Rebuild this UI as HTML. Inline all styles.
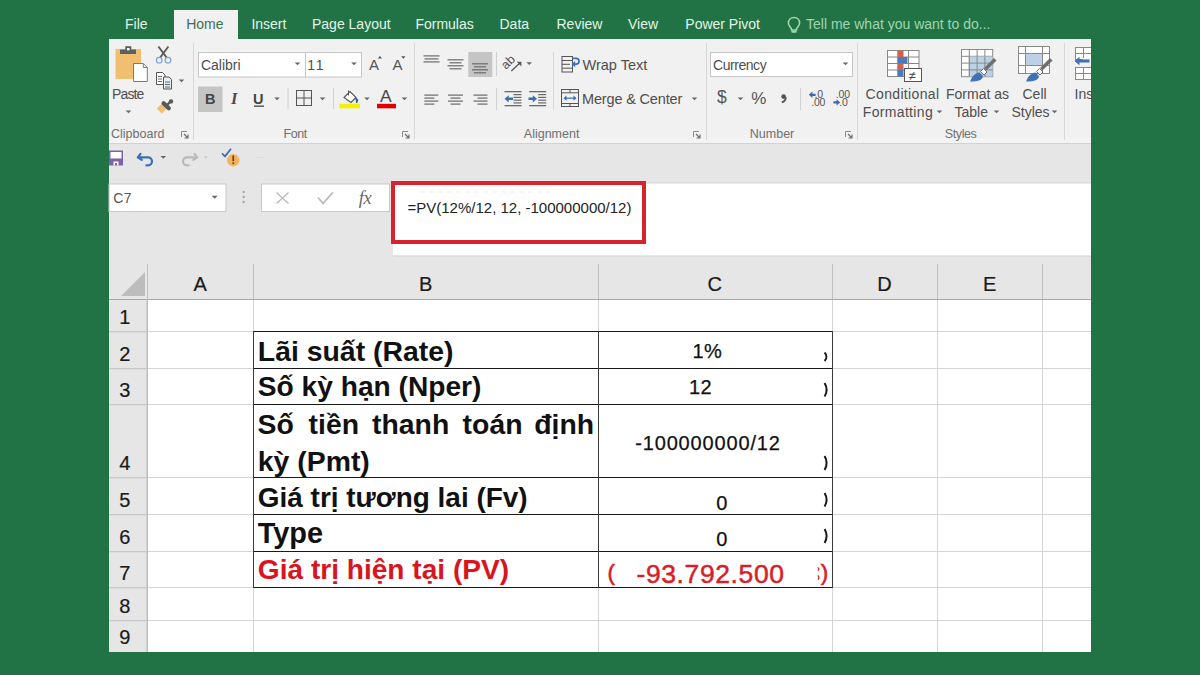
<!DOCTYPE html>
<html><head><meta charset="utf-8">
<style>
*{margin:0;padding:0;box-sizing:border-box}
html,body{width:1200px;height:675px;overflow:hidden;background:#217346;font-family:"Liberation Sans",sans-serif}
.t{position:absolute;white-space:nowrap;line-height:1}
svg{position:absolute;left:0;top:0}
</style></head><body>
<svg width="1200" height="675" viewBox="0 0 1200 675">
<rect x="174" y="10" width="64" height="30" fill="#f1f1f1" />
<path d="M794 17.5c-3.3 0-5.6 2.5-5.6 5.5 0 2.2 1.3 3.4 2.3 4.6 .6.8.8 1.4.8 2.4h5c0-1 .2-1.6.8-2.4 1-1.2 2.3-2.4 2.3-4.6 0-3-2.3-5.5-5.6-5.5z" fill="none" stroke="#9fd6b0" stroke-width="1.6" />
<rect x="791.3" y="30.6" width="5.4" height="2.2" fill="#9fd6b0" rx="1"/>
<rect x="109" y="39" width="982" height="105" fill="#f1f1f1" />
<rect x="109" y="138" width="982" height="5" fill="#f4f4f4" />
<rect x="109" y="143" width="982" height="1" fill="#d2d2d2" />
<line x1="193.5" y1="43" x2="193.5" y2="140" stroke="#d8d8d8" stroke-width="1" />
<line x1="414.5" y1="43" x2="414.5" y2="140" stroke="#d8d8d8" stroke-width="1" />
<line x1="706.5" y1="43" x2="706.5" y2="140" stroke="#d8d8d8" stroke-width="1" />
<line x1="857.5" y1="43" x2="857.5" y2="140" stroke="#d8d8d8" stroke-width="1" />
<line x1="1064.5" y1="43" x2="1064.5" y2="140" stroke="#d8d8d8" stroke-width="1" />
<path d="M181.5 137V131.5H187" fill="none" stroke="#8a8a8a" stroke-width="1" />
<path d="M184 134l3.5 3.5M188 134.5v3.5h-3.5" fill="none" stroke="#6a6a6a" stroke-width="1.1" />
<path d="M402.5 137V131.5H408" fill="none" stroke="#8a8a8a" stroke-width="1" />
<path d="M405 134l3.5 3.5M409 134.5v3.5h-3.5" fill="none" stroke="#6a6a6a" stroke-width="1.1" />
<path d="M693.5 137V131.5H699" fill="none" stroke="#8a8a8a" stroke-width="1" />
<path d="M696 134l3.5 3.5M700 134.5v3.5h-3.5" fill="none" stroke="#6a6a6a" stroke-width="1.1" />
<path d="M845.5 137V131.5H851" fill="none" stroke="#8a8a8a" stroke-width="1" />
<path d="M848 134l3.5 3.5M852 134.5v3.5h-3.5" fill="none" stroke="#6a6a6a" stroke-width="1.1" />
<rect x="115.5" y="49" width="25.5" height="30" fill="#f0c070" />
<rect x="120" y="49.5" width="16" height="4.5" fill="#5e5e5e" />
<rect x="125.3" y="46.2" width="6" height="4" fill="#5e5e5e" />
<rect x="127" y="48" width="2.6" height="2.4" fill="#f4f4f4" />
<path d="M133.5 63.5h9.8l4 4v14h-13.8z" fill="#fff" stroke="#7a7a7a" stroke-width="1" />
<path d="M143.3 63.5v4h4" fill="none" stroke="#7a7a7a" stroke-width="1" />
<path d="M125.7 110.5h5.6l-2.8 2.8z" fill="#666" stroke="none" stroke-width="1" />
<path d="M158.4 46.5l8.4 11.3M168.4 46.5l-8.4 11.3" fill="none" stroke="#5a5a5a" stroke-width="1.9" />
<circle cx="159.2" cy="60.2" r="2.8" fill="none" stroke="#7aa2d2" stroke-width="1.2"/>
<circle cx="168" cy="60.2" r="2.8" fill="none" stroke="#7aa2d2" stroke-width="1.2"/>
<path d="M156.5 72.5h6l2.5 2.5v9.5h-8.5z" fill="#fff" stroke="#555" stroke-width="1" />
<path d="M163.5 77h5.5l2.5 2.5v9.5h-8z" fill="#e4f0f6" stroke="#555" stroke-width="1" />
<line x1="158" y1="76.5" x2="162" y2="76.5" stroke="#555" stroke-width="0.9" />
<line x1="158" y1="79" x2="162" y2="79" stroke="#555" stroke-width="0.9" />
<line x1="158" y1="81.5" x2="162" y2="81.5" stroke="#555" stroke-width="0.9" />
<line x1="165" y1="82" x2="170" y2="82" stroke="#555" stroke-width="0.9" />
<line x1="165" y1="84.5" x2="170" y2="84.5" stroke="#555" stroke-width="0.9" />
<line x1="165" y1="87" x2="170" y2="87" stroke="#555" stroke-width="0.9" />
<path d="M178.7 79.5h5.6l-2.8 2.8z" fill="#666" stroke="none" stroke-width="1" />
<path d="M156.8 108.6l5-5 5 5-5 5z" fill="#f2bf72" stroke="none" stroke-width="1" />
<line x1="163.6" y1="103.2" x2="168.8" y2="108.2" stroke="#585858" stroke-width="4.2" stroke-linecap="round"/>
<line x1="167.5" y1="104.5" x2="170.8" y2="101.4" stroke="#585858" stroke-width="2.4" stroke-linecap="round"/>
<circle cx="171" cy="101.4" r="2.2" fill="#585858"/>
<rect x="198.5" y="52.5" width="107" height="24.5" fill="#fff" stroke="#c6c6c6" stroke-width="1"/>
<rect x="305.5" y="52.5" width="56" height="24.5" fill="#fff" stroke="#c6c6c6" stroke-width="1"/>
<path d="M294.7 62.5h5.6l-2.8 2.8z" fill="#666" stroke="none" stroke-width="1" />
<path d="M351.2 62.5h5.6l-2.8 2.8z" fill="#666" stroke="none" stroke-width="1" />
<path d="M377.8 58.4l2.1-2.4 2.1 2.4z" fill="#555" stroke="none" stroke-width="1" />
<path d="M401.2 56.2h4.3l-2.15 2.5z" fill="#555" stroke="none" stroke-width="1" />
<rect x="198" y="86.5" width="24.5" height="25.5" fill="#c5c5c5" />
<rect x="254" y="105.5" width="10" height="1.3" fill="#444" />
<path d="M274.2 97.5h5.6l-2.8 2.8z" fill="#666" stroke="none" stroke-width="1" />
<line x1="288" y1="88" x2="288" y2="109" stroke="#d0d0d0" stroke-width="1" />
<rect x="296.5" y="90.5" width="15" height="15" fill="none" stroke="#555" stroke-width="1"/>
<line x1="304" y1="90.5" x2="304" y2="105.5" stroke="#555" stroke-width="1" />
<line x1="296.5" y1="98" x2="311.5" y2="98" stroke="#555" stroke-width="1" />
<path d="M319.7 97.5h5.6l-2.8 2.8z" fill="#666" stroke="none" stroke-width="1" />
<line x1="333.5" y1="88" x2="333.5" y2="109" stroke="#d0d0d0" stroke-width="1" />
<path d="M344 97.5l6-6 6 6-5 5z" fill="#fff" stroke="#555" stroke-width="1.1" />
<path d="M348.5 90.5v5" fill="none" stroke="#555" stroke-width="1" />
<path d="M355 97.5l2.5 2.5-1 3" fill="#2f5f9a" stroke="#2f5f9a" stroke-width="1.5" />
<rect x="339.5" y="103.8" width="20.5" height="4.5" fill="#f5f000" />
<path d="M364.2 97.5h5.6l-2.8 2.8z" fill="#666" stroke="none" stroke-width="1" />
<rect x="377" y="103.8" width="19" height="4.5" fill="#e00000" />
<path d="M401.7 97.5h5.6l-2.8 2.8z" fill="#666" stroke="none" stroke-width="1" />
<rect x="423.5" y="55.3" width="16" height="1.2" fill="#6a6a6a" />
<rect x="424.5" y="58.3" width="14" height="1.2" fill="#6a6a6a" />
<rect x="423.5" y="61.3" width="16" height="1.2" fill="#6a6a6a" />
<rect x="447.5" y="59.2" width="16" height="1.2" fill="#6a6a6a" />
<rect x="449.5" y="62.2" width="12" height="1.2" fill="#6a6a6a" />
<rect x="447.5" y="65.2" width="16" height="1.2" fill="#6a6a6a" />
<rect x="449.5" y="68.2" width="12" height="1.2" fill="#6a6a6a" />
<rect x="468.3" y="52" width="24" height="25" fill="#c5c5c5" />
<rect x="472" y="63.2" width="16" height="1.2" fill="#6a6a6a" />
<rect x="474" y="66.2" width="12" height="1.2" fill="#6a6a6a" />
<rect x="472" y="69.2" width="16" height="1.2" fill="#6a6a6a" />
<rect x="474" y="72.2" width="12" height="1.2" fill="#6a6a6a" />
<line x1="496.5" y1="52" x2="496.5" y2="76" stroke="#d0d0d0" stroke-width="1" />
<line x1="511.3" y1="71" x2="520.5" y2="62.5" stroke="#555" stroke-width="1.3" />
<path d="M516.8 61.8h4.6v4.6z" fill="#555" stroke="none" stroke-width="1" />
<path d="M526.4000000000001 62.3h5.6l-2.8 2.8z" fill="#666" stroke="none" stroke-width="1" />
<line x1="553.5" y1="52" x2="553.5" y2="110" stroke="#d8d8d8" stroke-width="1" />
<rect x="424.3" y="94.5" width="14" height="1.2" fill="#6a6a6a" />
<rect x="424.3" y="97.5" width="10" height="1.2" fill="#6a6a6a" />
<rect x="424.3" y="100.5" width="14" height="1.2" fill="#6a6a6a" />
<rect x="424.3" y="103.5" width="10" height="1.2" fill="#6a6a6a" />
<rect x="448" y="94.5" width="15" height="1.2" fill="#6a6a6a" />
<rect x="450.5" y="97.5" width="10" height="1.2" fill="#6a6a6a" />
<rect x="448" y="100.5" width="15" height="1.2" fill="#6a6a6a" />
<rect x="450.5" y="103.5" width="10" height="1.2" fill="#6a6a6a" />
<rect x="473.5" y="94.5" width="14" height="1.2" fill="#6a6a6a" />
<rect x="477.5" y="97.5" width="10" height="1.2" fill="#6a6a6a" />
<rect x="473.5" y="100.5" width="14" height="1.2" fill="#6a6a6a" />
<rect x="477.5" y="103.5" width="10" height="1.2" fill="#6a6a6a" />
<line x1="496.5" y1="88" x2="496.5" y2="110" stroke="#d0d0d0" stroke-width="1" />
<rect x="504.5" y="91" width="17" height="1.3" fill="#6a6a6a" />
<rect x="504.5" y="105" width="17" height="1.3" fill="#6a6a6a" />
<rect x="513.5" y="94" width="8" height="1.2" fill="#6a6a6a" />
<rect x="513.5" y="96.8" width="8" height="1.2" fill="#6a6a6a" />
<rect x="513.5" y="99.6" width="8" height="1.2" fill="#6a6a6a" />
<rect x="513.5" y="102.3" width="8" height="1.2" fill="#6a6a6a" />
<rect x="529.2" y="91" width="17" height="1.3" fill="#6a6a6a" />
<rect x="529.2" y="105" width="17" height="1.3" fill="#6a6a6a" />
<rect x="538.2" y="94" width="8" height="1.2" fill="#6a6a6a" />
<rect x="538.2" y="96.8" width="8" height="1.2" fill="#6a6a6a" />
<rect x="538.2" y="99.6" width="8" height="1.2" fill="#6a6a6a" />
<rect x="538.2" y="102.3" width="8" height="1.2" fill="#6a6a6a" />
<path d="M504.5 98.8l4.2-3.6v2.4h4.3v2.4h-4.3v2.4z" fill="#3a6fb5" stroke="none" stroke-width="1" />
<path d="M537 98.8l-4.2-3.6v2.4h-4.3v2.4h4.3v2.4z" fill="#3a6fb5" stroke="none" stroke-width="1" />
<rect x="562" y="56.5" width="10.5" height="15.5" fill="none" stroke="#555" stroke-width="1"/>
<line x1="562" y1="60.5" x2="572.5" y2="60.5" stroke="#555" stroke-width="1" />
<line x1="562" y1="64.3" x2="570" y2="64.3" stroke="#555" stroke-width="1" />
<line x1="562" y1="68.2" x2="572.5" y2="68.2" stroke="#555" stroke-width="1" />
<path d="M572.5 58.3h3.6a2.9 2.9 0 0 1 0 5.8h-1.8" fill="none" stroke="#3a6fb5" stroke-width="1.7" />
<path d="M575.2 60.9l-3.6 3.2 3.6 3.2z" fill="#3a6fb5" stroke="none" stroke-width="1" />
<rect x="561.5" y="89.5" width="17" height="17" fill="none" stroke="#555" stroke-width="1"/>
<line x1="561.5" y1="92.8" x2="578.5" y2="92.8" stroke="#555" stroke-width="1" />
<line x1="561.5" y1="103.5" x2="578.5" y2="103.5" stroke="#555" stroke-width="1" />
<line x1="570" y1="89.5" x2="570" y2="92.8" stroke="#555" stroke-width="1" />
<line x1="570" y1="103.5" x2="570" y2="106.5" stroke="#555" stroke-width="1" />
<path d="M564.5 98.2h11" fill="none" stroke="#3a6fb5" stroke-width="1.2" />
<path d="M563.5 98.2l3-2.6v5.2zM576.5 98.2l-3-2.6v5.2z" fill="#3a6fb5" stroke="none" stroke-width="1" />
<path d="M691.7 97.5h5.6l-2.8 2.8z" fill="#666" stroke="none" stroke-width="1" />
<rect x="710.5" y="52.5" width="142" height="24" fill="#fff" stroke="#c6c6c6" stroke-width="1"/>
<path d="M842.7 62.5h5.6l-2.8 2.8z" fill="#666" stroke="none" stroke-width="1" />
<path d="M737.7 97.5h5.6l-2.8 2.8z" fill="#666" stroke="none" stroke-width="1" />
<circle cx="783.6" cy="96.6" r="2.3" fill="#555"/>
<path d="M785.6 97.2c.4 2.4-1 4.2-3.8 5.2" fill="none" stroke="#555" stroke-width="1.9" />
<line x1="800.5" y1="88" x2="800.5" y2="110" stroke="#d0d0d0" stroke-width="1" />
<path d="M808.8 94.8l3.6-3.2v2.1h3.2v2.2h-3.2v2.1z" fill="#3d6aa6" stroke="none" stroke-width="1" />
<path d="M840.2 102.4l-3.6-3.2v2.1h-3.2v2.2h3.2v2.1z" fill="#3d6aa6" stroke="none" stroke-width="1" />
<rect x="887.5" y="50.5" width="31.5" height="26.0" fill="#fff" stroke="#888" stroke-width="1"/>
<line x1="898.0" y1="50.5" x2="898.0" y2="76.5" stroke="#888" stroke-width="1" />
<line x1="908.5" y1="50.5" x2="908.5" y2="76.5" stroke="#888" stroke-width="1" />
<line x1="887.5" y1="57.0" x2="919.0" y2="57.0" stroke="#888" stroke-width="1" />
<line x1="887.5" y1="63.5" x2="919.0" y2="63.5" stroke="#888" stroke-width="1" />
<line x1="887.5" y1="70.0" x2="919.0" y2="70.0" stroke="#888" stroke-width="1" />
<rect x="897.5" y="50.5" width="6" height="6.5" fill="#d0634d" />
<rect x="897.5" y="57" width="10" height="6.5" fill="#4a7bbd" />
<rect x="897.5" y="63.5" width="6" height="6.5" fill="#d0634d" />
<rect x="897.5" y="70" width="6" height="6.5" fill="#4a7bbd" />
<rect x="904.5" y="68.5" width="17" height="13" fill="#fff" stroke="#555" stroke-width="1"/>
<path d="M936.7 110.5h5.6l-2.8 2.8z" fill="#666" stroke="none" stroke-width="1" />
<rect x="961.5" y="49.5" width="31.2" height="27.2" fill="#fff" stroke="#888" stroke-width="1"/>
<line x1="969.3" y1="49.5" x2="969.3" y2="76.7" stroke="#888" stroke-width="1" />
<line x1="977.1" y1="49.5" x2="977.1" y2="76.7" stroke="#888" stroke-width="1" />
<line x1="984.9" y1="49.5" x2="984.9" y2="76.7" stroke="#888" stroke-width="1" />
<line x1="961.5" y1="56.3" x2="992.7" y2="56.3" stroke="#888" stroke-width="1" />
<line x1="961.5" y1="63.1" x2="992.7" y2="63.1" stroke="#888" stroke-width="1" />
<line x1="961.5" y1="69.9" x2="992.7" y2="69.9" stroke="#888" stroke-width="1" />
<rect x="969.5" y="56.5" width="23" height="20" fill="#bcd0e6" />
<line x1="969.3" y1="56.5" x2="969.3" y2="76.5" stroke="#888" stroke-width="1" />
<line x1="977.1" y1="56.5" x2="977.1" y2="76.5" stroke="#888" stroke-width="1" />
<line x1="984.9" y1="56.5" x2="984.9" y2="76.5" stroke="#888" stroke-width="1" />
<line x1="969.5" y1="63.1" x2="992.5" y2="63.1" stroke="#888" stroke-width="1" />
<line x1="969.5" y1="69.9" x2="992.5" y2="69.9" stroke="#888" stroke-width="1" />
<path d="M984 68l10-10 2.5 2.5-10 10z" fill="#6f6f6f" stroke="none" stroke-width="1" />
<path d="M980.5 71.5l3-3 3.5 3.5-3 3z" fill="#fff" stroke="#6f6f6f" stroke-width="1" />
<path d="M970 81.5c2-5 5-8.5 9.5-9l3.5 3.5c-.5 4-4 5.5-13 5.5z" fill="#3e72b4" stroke="none" stroke-width="1" />
<path d="M993.7 110.5h5.6l-2.8 2.8z" fill="#666" stroke="none" stroke-width="1" />
<rect x="1018.5" y="46.5" width="31" height="27" fill="#fff" stroke="#888" stroke-width="1"/>
<rect x="1025.5" y="53.5" width="17" height="12" fill="#bcd0e6" stroke="#888" stroke-width="1"/>
<line x1="1025.5" y1="46.5" x2="1025.5" y2="73.5" stroke="#888" stroke-width="1" />
<line x1="1042.5" y1="46.5" x2="1042.5" y2="73.5" stroke="#888" stroke-width="1" />
<line x1="1018.5" y1="53.5" x2="1049.5" y2="53.5" stroke="#888" stroke-width="1" />
<line x1="1018.5" y1="65.5" x2="1049.5" y2="65.5" stroke="#888" stroke-width="1" />
<path d="M1040 68l10-10 2.5 2.5-10 10z" fill="#6f6f6f" stroke="none" stroke-width="1" />
<path d="M1036.5 71.5l3-3 3.5 3.5-3 3z" fill="#fff" stroke="#6f6f6f" stroke-width="1" />
<path d="M1026 81.5c2-5 5-8.5 9.5-9l3.5 3.5c-.5 4-4 5.5-13 5.5z" fill="#3e72b4" stroke="none" stroke-width="1" />
<path d="M1051.7 110.5h5.6l-2.8 2.8z" fill="#666" stroke="none" stroke-width="1" />
<rect x="1075.5" y="47.5" width="17" height="12" fill="#fff" stroke="#888" stroke-width="1"/>
<line x1="1075.5" y1="53.5" x2="1092" y2="53.5" stroke="#888" stroke-width="1" />
<line x1="1083.5" y1="47.5" x2="1083.5" y2="59.5" stroke="#888" stroke-width="1" />
<rect x="1075.5" y="67.5" width="17" height="12" fill="#fff" stroke="#888" stroke-width="1"/>
<line x1="1075.5" y1="73.5" x2="1092" y2="73.5" stroke="#888" stroke-width="1" />
<line x1="1083.5" y1="67.5" x2="1083.5" y2="79.5" stroke="#888" stroke-width="1" />
<rect x="1083" y="58" width="9" height="6" fill="#f1f1f1" />
<path d="M1074.5 61l5-4.3v2.9h10v2.8h-10v2.9z" fill="#3e72b4" stroke="none" stroke-width="1" />
<rect x="109" y="144" width="982" height="112" fill="#e6e6e6" />
<rect x="109" y="150.5" width="14" height="15" fill="#7e61a8" />
<rect x="110.5" y="152" width="11" height="6.5" fill="#fff" />
<rect x="113.5" y="161.5" width="5" height="4" fill="#fff" />
<rect x="115" y="163" width="2" height="2.5" fill="#7e61a8" />
<path d="M140.5 153.8l-2.7 3.6 3.9 2.4" fill="none" stroke="#3a6fb5" stroke-width="2.2" stroke-linecap="round" stroke-linejoin="round"/>
<path d="M138.6 157.3h9.4a4 4 0 0 1 0 8h-1.6" fill="none" stroke="#3a6fb5" stroke-width="2.2" stroke-linecap="round"/>
<path d="M160.5 156h5.6l-2.8 2.8z" fill="#666" stroke="none" stroke-width="1" />
<path d="M194.5 153.8l2.7 3.6-3.9 2.4" fill="none" stroke="#b9b9b9" stroke-width="2.2" stroke-linecap="round" stroke-linejoin="round"/>
<path d="M196.4 157.3h-9.4a4 4 0 0 0 0 8h1.6" fill="none" stroke="#b9b9b9" stroke-width="2.2" stroke-linecap="round"/>
<path d="M203.8 156.5h4l-2.0 2.0z" fill="#c6c6c6" stroke="none" stroke-width="1" />
<path d="M222 153.3l3 3 6-7.5" fill="none" stroke="#3a6fb5" stroke-width="1.8" />
<circle cx="233.2" cy="160.2" r="6.2" fill="#f4b45b"/>
<rect x="232.4" y="155.5" width="1.7" height="5.6" fill="#7a3b00" />
<rect x="232.4" y="162.4" width="1.7" height="1.7" fill="#7a3b00" />
<rect x="256" y="157" width="8" height="1" fill="#dcdcdc" />
<rect x="109" y="184" width="117" height="27.5" fill="#fff" stroke="#c8c8c8" stroke-width="1"/>
<path d="M211.7 195.8h6l-3.0 3.0z" fill="#666" stroke="none" stroke-width="1" />
<circle cx="243.7" cy="192" r="1.2" fill="#a8a8a8"/>
<circle cx="243.7" cy="197" r="1.2" fill="#a8a8a8"/>
<circle cx="243.7" cy="202" r="1.2" fill="#a8a8a8"/>
<rect x="261.5" y="184" width="128" height="27.5" fill="#fff" stroke="#c8c8c8" stroke-width="1"/>
<path d="M276.5 192.5l12 11M288.5 192.5l-12 11" fill="none" stroke="#bdbdbd" stroke-width="1.5" />
<path d="M318 197.5l5 5.8 10-11" fill="none" stroke="#bdbdbd" stroke-width="1.8" />
<rect x="393" y="183" width="698" height="73" fill="#fff" />
<rect x="393" y="182.5" width="698" height="1" fill="#d6d6d6" />
<rect x="393" y="256" width="698" height="1" fill="#d4d4d4" />
<rect x="393" y="183" width="251" height="59" fill="none" stroke="#d8232f" stroke-width="4"/>
<rect x="420" y="191.5" width="5" height="1" fill="#eeeeee" />
<rect x="429" y="191.5" width="5" height="1" fill="#eeeeee" />
<rect x="438" y="191.5" width="5" height="1" fill="#eeeeee" />
<rect x="447" y="191.5" width="5" height="1" fill="#eeeeee" />
<rect x="456" y="191.5" width="5" height="1" fill="#eeeeee" />
<rect x="465" y="191.5" width="5" height="1" fill="#eeeeee" />
<rect x="474" y="191.5" width="5" height="1" fill="#eeeeee" />
<rect x="483" y="191.5" width="5" height="1" fill="#eeeeee" />
<rect x="492" y="191.5" width="5" height="1" fill="#eeeeee" />
<rect x="501" y="191.5" width="5" height="1" fill="#eeeeee" />
<rect x="510" y="191.5" width="5" height="1" fill="#eeeeee" />
<rect x="519" y="191.5" width="5" height="1" fill="#eeeeee" />
<rect x="528" y="191.5" width="5" height="1" fill="#eeeeee" />
<rect x="537" y="191.5" width="5" height="1" fill="#eeeeee" />
<rect x="546" y="191.5" width="5" height="1" fill="#eeeeee" />
<rect x="109" y="256" width="982" height="43" fill="#e6e6e6" />
<rect x="393" y="255.5" width="698" height="1" fill="#cfcfcf" />
<rect x="109" y="300" width="39" height="352" fill="#e6e6e6" />
<rect x="148" y="300" width="943" height="352" fill="#fff" />
<rect x="109" y="299" width="982" height="1" fill="#a6a6a6" />
<rect x="146.5" y="299" width="1.5" height="353" fill="#bcbcbc" />
<rect x="147" y="264" width="1" height="35" fill="#c0c0c0" />
<rect x="253" y="264" width="1" height="35" fill="#c0c0c0" />
<rect x="598" y="264" width="1" height="35" fill="#c0c0c0" />
<rect x="832" y="264" width="1" height="35" fill="#c0c0c0" />
<rect x="937" y="264" width="1" height="35" fill="#c0c0c0" />
<rect x="1042" y="264" width="1" height="35" fill="#c0c0c0" />
<path d="M145 272v24h-24z" fill="#bdbdbd" stroke="none" stroke-width="1" />
<rect x="109" y="331" width="38" height="1.3" fill="#c8c8c8" />
<rect x="148" y="331" width="943" height="1" fill="#d4d4d4" />
<rect x="109" y="368" width="38" height="1.3" fill="#c8c8c8" />
<rect x="148" y="368" width="943" height="1" fill="#d4d4d4" />
<rect x="109" y="404" width="38" height="1.3" fill="#c8c8c8" />
<rect x="148" y="404" width="943" height="1" fill="#d4d4d4" />
<rect x="109" y="477" width="38" height="1.3" fill="#c8c8c8" />
<rect x="148" y="477" width="943" height="1" fill="#d4d4d4" />
<rect x="109" y="514" width="38" height="1.3" fill="#c8c8c8" />
<rect x="148" y="514" width="943" height="1" fill="#d4d4d4" />
<rect x="109" y="551" width="38" height="1.3" fill="#c8c8c8" />
<rect x="148" y="551" width="943" height="1" fill="#d4d4d4" />
<rect x="109" y="587" width="38" height="1.3" fill="#c8c8c8" />
<rect x="148" y="587" width="943" height="1" fill="#d4d4d4" />
<rect x="109" y="620" width="38" height="1.3" fill="#c8c8c8" />
<rect x="148" y="620" width="943" height="1" fill="#d4d4d4" />
<rect x="253" y="300" width="1" height="352" fill="#d4d4d4" />
<rect x="598" y="300" width="1" height="352" fill="#d4d4d4" />
<rect x="832" y="300" width="1" height="352" fill="#d4d4d4" />
<rect x="937" y="300" width="1" height="352" fill="#d4d4d4" />
<rect x="1042" y="300" width="1" height="352" fill="#d4d4d4" />
<rect x="253" y="331" width="580" height="1" fill="#1a1a1a" />
<rect x="253" y="368" width="580" height="1" fill="#1a1a1a" />
<rect x="253" y="404" width="580" height="1" fill="#1a1a1a" />
<rect x="253" y="477" width="580" height="1" fill="#1a1a1a" />
<rect x="253" y="514" width="580" height="1" fill="#1a1a1a" />
<rect x="253" y="551" width="580" height="1" fill="#1a1a1a" />
<rect x="253" y="587" width="580" height="1" fill="#1a1a1a" />
<rect x="253" y="331" width="1" height="257" fill="#3a3a3a" />
<rect x="598" y="331" width="1" height="257" fill="#3a3a3a" />
<rect x="832" y="331" width="1" height="257" fill="#3a3a3a" />
<path d="M817.6 567.5c1.2.5 1.4 2 .6 3.2M817.8 575.5c1.4.8 1.4 2.8 .2 4" fill="none" stroke="#d81e2a" stroke-width="1.3" />
<path d="M824.6 352.5c2.4 2.55 2.4 5.949999999999999 0 8.5" fill="none" stroke="#1a1a1a" stroke-width="2.0" />
<path d="M824.6 383c2.4 4.05 2.4 9.45 0 13.5" fill="none" stroke="#1a1a1a" stroke-width="2.0" />
<path d="M824.6 456c2.4 4.2 2.4 9.799999999999999 0 14" fill="none" stroke="#1a1a1a" stroke-width="2.0" />
<path d="M824.6 493c2.4 4.05 2.4 9.45 0 13.5" fill="none" stroke="#1a1a1a" stroke-width="2.0" />
<path d="M824.6 529c2.4 4.2 2.4 9.799999999999999 0 14" fill="none" stroke="#1a1a1a" stroke-width="2.0" />
<rect x="1091" y="39" width="109" height="640" fill="#217346"/>
</svg>
<div class="t" style="left:125.00px;top:17.40px;font-size:14px;color:#e3f3e7;font-weight:normal;">File</div>
<div class="t" style="left:186.20px;top:17.40px;font-size:14px;color:#3f6f52;font-weight:normal;">Home</div>
<div class="t" style="left:251.40px;top:17.40px;font-size:14px;color:#e3f3e7;font-weight:normal;">Insert</div>
<div class="t" style="left:312.00px;top:17.40px;font-size:14px;color:#e3f3e7;font-weight:normal;">Page Layout</div>
<div class="t" style="left:415.40px;top:17.40px;font-size:14px;color:#e3f3e7;font-weight:normal;">Formulas</div>
<div class="t" style="left:499.50px;top:17.40px;font-size:14px;color:#e3f3e7;font-weight:normal;">Data</div>
<div class="t" style="left:556.50px;top:17.40px;font-size:14px;color:#e3f3e7;font-weight:normal;">Review</div>
<div class="t" style="left:628.00px;top:17.40px;font-size:14px;color:#e3f3e7;font-weight:normal;">View</div>
<div class="t" style="left:685.30px;top:17.40px;font-size:14px;color:#e3f3e7;font-weight:normal;">Power Pivot</div>
<div class="t" style="left:806.00px;top:17.40px;font-size:14px;color:#9fd6b0;font-weight:normal;">Tell me what you want to do...</div>
<div class="t" style="left:111.00px;top:127.57px;font-size:12.5px;color:#707070;font-weight:normal;">Clipboard</div>
<div class="t" style="left:283.60px;top:127.57px;font-size:12.5px;color:#707070;font-weight:normal;letter-spacing:-0.5px">Font</div>
<div class="t" style="left:523.80px;top:127.57px;font-size:12.5px;color:#707070;font-weight:normal;">Alignment</div>
<div class="t" style="left:749.80px;top:127.57px;font-size:12.5px;color:#707070;font-weight:normal;">Number</div>
<div class="t" style="left:944.80px;top:127.57px;font-size:12.5px;color:#707070;font-weight:normal;letter-spacing:-0.4px">Styles</div>
<div class="t" style="left:112.00px;top:86.90px;font-size:14px;color:#4e4e4e;font-weight:normal;letter-spacing:-0.85px">Paste</div>
<div class="t" style="left:200.90px;top:57.70px;font-size:14px;color:#4e4e4e;font-weight:normal;">Calibri</div>
<div class="t" style="left:307.30px;top:57.70px;font-size:14px;color:#4e4e4e;font-weight:normal;letter-spacing:1.8px">11</div>
<div class="t" style="left:368.90px;top:57.05px;font-size:15px;color:#555;font-weight:normal;">A</div>
<div class="t" style="left:392.40px;top:57.05px;font-size:15px;color:#555;font-weight:normal;">A</div>
<div class="t" style="left:205.00px;top:91.97px;font-size:14.5px;color:#444;font-weight:bold;">B</div>
<div class="t" style="left:231.00px;top:90.57px;font-size:16.5px;color:#4a4a4a;font-weight:bold;font-style:italic;font-family:'Liberation Serif',serif">I</div>
<div class="t" style="left:253.00px;top:91.97px;font-size:14.5px;color:#444;font-weight:bold;">U</div>
<div class="t" style="left:379.90px;top:87.61px;font-size:17.4px;color:#444;font-weight:normal;">A</div>
<div class="t" style="left:506.40px;top:60.17px;font-size:12.5px;color:#555;font-weight:normal;"><span style="display:inline-block;transform:rotate(-45deg);transform-origin:0 80%">ab</span></div>
<div class="t" style="left:582.50px;top:57.58px;font-size:14.5px;color:#4e4e4e;font-weight:normal;">Wrap Text</div>
<div class="t" style="left:582.00px;top:92.17px;font-size:14.5px;color:#4e4e4e;font-weight:normal;letter-spacing:-0.16px">Merge &amp; Center</div>
<div class="t" style="left:713.00px;top:57.60px;font-size:14px;color:#4e4e4e;font-weight:normal;letter-spacing:-0.45px">Currency</div>
<div class="t" style="left:717.00px;top:89.33px;font-size:17.5px;color:#555;font-weight:normal;">$</div>
<div class="t" style="left:751.20px;top:89.55px;font-size:17px;color:#555;font-weight:normal;">%</div>
<div class="t" style="left:814.60px;top:89.48px;font-size:10.5px;color:#555;font-weight:normal;letter-spacing:-0.2px">.0</div>
<div class="t" style="left:811.20px;top:97.28px;font-size:10.5px;color:#555;font-weight:normal;letter-spacing:-0.2px">.00</div>
<div class="t" style="left:835.80px;top:89.48px;font-size:10.5px;color:#555;font-weight:normal;letter-spacing:-0.2px">.00</div>
<div class="t" style="left:839.20px;top:97.28px;font-size:10.5px;color:#555;font-weight:normal;letter-spacing:-0.2px">.0</div>
<div class="t" style="left:908.50px;top:68.75px;font-size:13px;color:#444;font-weight:normal;">≠</div>
<div class="t" style="left:865.60px;top:87.10px;font-size:14px;color:#4e4e4e;font-weight:normal;letter-spacing:0.34px">Conditional</div>
<div class="t" style="left:862.80px;top:105.10px;font-size:14px;color:#4e4e4e;font-weight:normal;letter-spacing:0.33px">Formatting</div>
<div class="t" style="left:946.00px;top:87.10px;font-size:14px;color:#4e4e4e;font-weight:normal;">Format as</div>
<div class="t" style="left:954.50px;top:105.10px;font-size:14px;color:#4e4e4e;font-weight:normal;">Table</div>
<div class="t" style="left:1022.50px;top:87.10px;font-size:14px;color:#4e4e4e;font-weight:normal;">Cell</div>
<div class="t" style="left:1011.50px;top:105.10px;font-size:14px;color:#4e4e4e;font-weight:normal;">Styles</div>
<div class="t" style="left:1074.50px;top:87.10px;font-size:14px;color:#4e4e4e;font-weight:normal;">Ins</div>
<div class="t" style="left:113.20px;top:191.10px;font-size:14px;color:#555;font-weight:normal;letter-spacing:0.5px">C7</div>
<div class="t" style="left:358.80px;top:189.08px;font-size:18.5px;color:#6a6a6a;font-weight:normal;font-family:'Liberation Serif',serif;letter-spacing:-0.5px"><i>fx</i></div>
<div class="t" style="left:407.50px;top:200.25px;font-size:15px;color:#222;font-weight:normal;">=PV(12%/12, 12, -100000000/12)</div>
<div class="t" style="left:193.60px;top:274.30px;font-size:20px;color:#1a1a1a;font-weight:normal;-webkit-text-stroke:0.2px #1a1a1a">A</div>
<div class="t" style="left:419.00px;top:274.30px;font-size:20px;color:#1a1a1a;font-weight:normal;-webkit-text-stroke:0.2px #1a1a1a">B</div>
<div class="t" style="left:707.50px;top:274.30px;font-size:20px;color:#1a1a1a;font-weight:normal;-webkit-text-stroke:0.2px #1a1a1a">C</div>
<div class="t" style="left:877.20px;top:274.30px;font-size:20px;color:#1a1a1a;font-weight:normal;-webkit-text-stroke:0.2px #1a1a1a">D</div>
<div class="t" style="left:983.00px;top:274.30px;font-size:20px;color:#1a1a1a;font-weight:normal;-webkit-text-stroke:0.2px #1a1a1a">E</div>
<div class="t" style="left:119.30px;top:307.20px;font-size:20px;color:#1a1a1a;font-weight:normal;-webkit-text-stroke:0.2px #1a1a1a">1</div>
<div class="t" style="left:119.30px;top:344.20px;font-size:20px;color:#1a1a1a;font-weight:normal;-webkit-text-stroke:0.2px #1a1a1a">2</div>
<div class="t" style="left:119.30px;top:380.20px;font-size:20px;color:#1a1a1a;font-weight:normal;-webkit-text-stroke:0.2px #1a1a1a">3</div>
<div class="t" style="left:119.30px;top:453.20px;font-size:20px;color:#1a1a1a;font-weight:normal;-webkit-text-stroke:0.2px #1a1a1a">4</div>
<div class="t" style="left:119.30px;top:490.20px;font-size:20px;color:#1a1a1a;font-weight:normal;-webkit-text-stroke:0.2px #1a1a1a">5</div>
<div class="t" style="left:119.30px;top:527.20px;font-size:20px;color:#1a1a1a;font-weight:normal;-webkit-text-stroke:0.2px #1a1a1a">6</div>
<div class="t" style="left:119.30px;top:563.20px;font-size:20px;color:#1a1a1a;font-weight:normal;-webkit-text-stroke:0.2px #1a1a1a">7</div>
<div class="t" style="left:119.30px;top:596.20px;font-size:20px;color:#1a1a1a;font-weight:normal;-webkit-text-stroke:0.2px #1a1a1a">8</div>
<div class="t" style="left:119.30px;top:627.20px;font-size:20px;color:#1a1a1a;font-weight:normal;-webkit-text-stroke:0.2px #1a1a1a">9</div>
<div class="t" style="left:257.80px;top:336.86px;font-size:28.4px;color:#111;font-weight:bold;">Lãi suất (Rate)</div>
<div class="t" style="left:257.80px;top:373.37px;font-size:28.15px;color:#111;font-weight:bold;">Số kỳ hạn (Nper)</div>
<div class="t" style="left:257.60px;top:410.06px;font-size:28.4px;color:#111;font-weight:bold;">Số</div>
<div class="t" style="left:308.60px;top:410.06px;font-size:28.4px;color:#111;font-weight:bold;">tiền</div>
<div class="t" style="left:372.00px;top:410.06px;font-size:28.4px;color:#111;font-weight:bold;">thanh</div>
<div class="t" style="left:462.60px;top:410.06px;font-size:28.4px;color:#111;font-weight:bold;">toán</div>
<div class="t" style="left:534.20px;top:410.06px;font-size:28.4px;color:#111;font-weight:bold;">định</div>
<div class="t" style="left:257.80px;top:446.66px;font-size:28.4px;color:#111;font-weight:bold;">kỳ (Pmt)</div>
<div class="t" style="left:257.80px;top:483.84px;font-size:27.95px;color:#111;font-weight:bold;">Giá trị tương lai (Fv)</div>
<div class="t" style="left:257.80px;top:519.04px;font-size:28.9px;color:#111;font-weight:bold;">Type</div>
<div class="t" style="left:257.80px;top:556.32px;font-size:28.1px;color:#d9141e;font-weight:bold;">Giá trị hiện tại (PV)</div>
<div class="t" style="left:692.50px;top:341.20px;font-size:20px;color:#111;font-weight:normal;letter-spacing:0.45px;-webkit-text-stroke:0.25px #111">1%</div>
<div class="t" style="left:689.00px;top:377.00px;font-size:20px;color:#111;font-weight:normal;letter-spacing:0.45px;-webkit-text-stroke:0.25px #111">12</div>
<div class="t" style="left:635.20px;top:433.20px;font-size:20px;color:#111;font-weight:normal;letter-spacing:0.85px;-webkit-text-stroke:0.25px #111">-100000000/12</div>
<div class="t" style="left:716.20px;top:493.00px;font-size:20px;color:#111;font-weight:normal;letter-spacing:0.45px;-webkit-text-stroke:0.25px #111">0</div>
<div class="t" style="left:716.20px;top:529.00px;font-size:20px;color:#111;font-weight:normal;letter-spacing:0.45px;-webkit-text-stroke:0.25px #111">0</div>
<div class="t" style="left:636.50px;top:560.77px;font-size:26.5px;color:#d81e2a;font-weight:normal;letter-spacing:0.6px;-webkit-text-stroke:0.5px #d81e2a">-93.792.500</div>
<div class="t" style="left:607.60px;top:562.08px;font-size:22.5px;color:#d81e2a;font-weight:normal;-webkit-text-stroke:0.6px #d81e2a">(</div>
<div class="t" style="left:820.80px;top:562.08px;font-size:22.5px;color:#d81e2a;font-weight:normal;-webkit-text-stroke:0.6px #d81e2a">)</div>
</body></html>
